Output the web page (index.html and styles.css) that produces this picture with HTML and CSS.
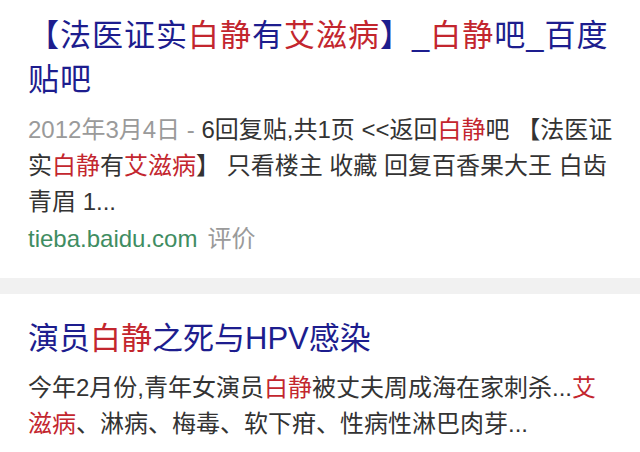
FILE: index.html
```html
<!DOCTYPE html>
<html lang="zh-CN">
<head>
<meta charset="utf-8">
<link rel="stylesheet" href="styles.css">
</head>
<body>
<div class="card">
  <div class="title">【法医证实<em>白静</em>有<em>艾滋病</em>】_<em>白静</em>吧_百度贴吧</div>
  <div class="snippet"><span class="date">2012年3月4日 - </span> 6回复贴,共1页 &lt;&lt;返回<em>白静</em>吧 【法医证实<em>白静</em>有<em>艾滋病</em>】 只看楼主 收藏 回复百香果大王 白齿青眉 1...</div>
  <div class="source"><span class="url">tieba.baidu.com</span><span class="rate">评价</span></div>
</div>
<div class="divider"></div>
<div class="card card-second">
  <div class="title">演员<em>白静</em>之死与HPV感染</div>
  <div class="snippet">今年2月份,青年女演员<em>白静</em>被丈夫周成海在家刺杀...<em>艾滋病</em>、淋病、梅毒、软下疳、性病性淋巴肉芽...</div>
</div>
</body>
</html>
```
FILE: styles.css
```css
html, body {
  margin: 0;
  padding: 0;
  background: #ffffff;
}
body {
  font-family: "Liberation Sans", "Noto Sans CJK SC", sans-serif;
  width: 640px;
  height: 452px;
  overflow: hidden;
}
em {
  font-style: normal;
  color: #c3262e;
}
.card {
  padding: 14px 20px 21px 28px;
}
.card-second {
  padding-top: 23px;
}
.title {
  font-size: 31px;
  line-height: 44px;
  letter-spacing: 1px;
  color: #1d1d8e;
  margin-bottom: 10px;
}
.card-second .title {
  letter-spacing: 0;
  margin-bottom: 9px;
}
.snippet {
  font-size: 24px;
  line-height: 36px;
  color: #333333;
}
.date {
  color: #9a9a9a;
}
.source {
  font-size: 24px;
  line-height: 36px;
  margin-top: 1px;
}
.url {
  color: #3f8d62;
}
.rate {
  color: #9a9a9a;
  margin-left: 10px;
}
.divider {
  height: 16px;
  background: #f1f1f1;
}
```
